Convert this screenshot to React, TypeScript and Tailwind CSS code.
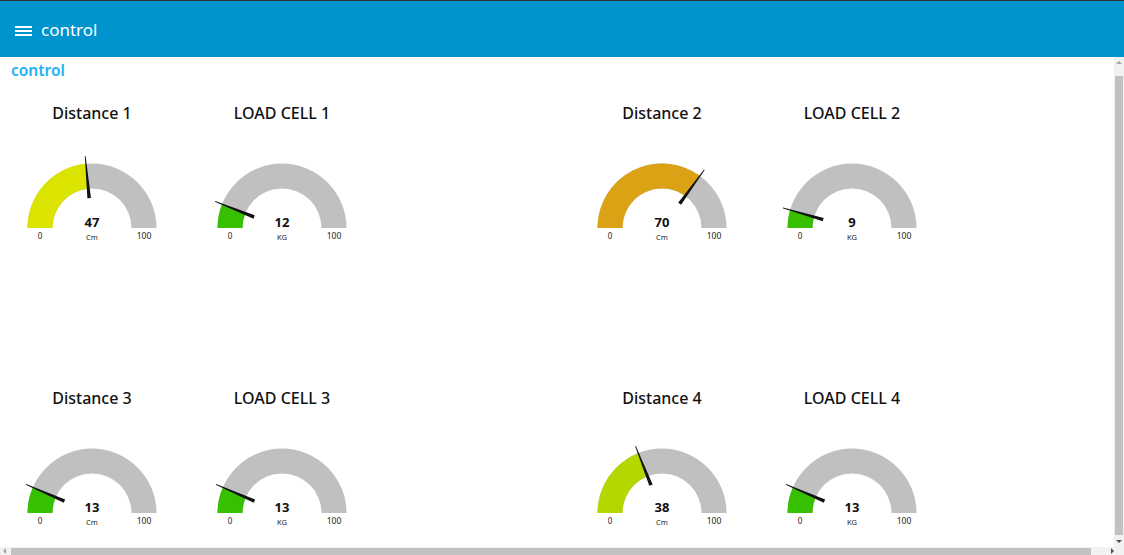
import React from "react";

type G = { title: string; value: number; unit: string; color: string } | null;

const rows: G[][] = [
  [
    { title: "Distance 1", value: 47, unit: "Cm", color: "#DBE300" },
    { title: "LOAD CELL 1", value: 12, unit: "KG", color: "#36C000" },
    null,
    { title: "Distance 2", value: 70, unit: "Cm", color: "#DBA216" },
    { title: "LOAD CELL 2", value: 9, unit: "KG", color: "#36C000" },
  ],
  [
    { title: "Distance 3", value: 13, unit: "Cm", color: "#36C000" },
    { title: "LOAD CELL 3", value: 13, unit: "KG", color: "#36C000" },
    null,
    { title: "Distance 4", value: 38, unit: "Cm", color: "#B2D800" },
    { title: "LOAD CELL 4", value: 13, unit: "KG", color: "#36C000" },
  ],
];

function pt(cx: number, cy: number, r: number, a: number) {
  return [cx - r * Math.cos(a), cy - r * Math.sin(a)];
}

function Gauge({ value, unit, color }: { value: number; unit: string; color: string }) {
  const cx = 75;
  const cy = 78;
  const ro = 64.5;
  const ri = 39.5;
  const a = (value / 100) * Math.PI;
  const [ox, oy] = pt(cx, cy, ro, a);
  const [ix, iy] = pt(cx, cy, ri, a);
  const bg = `M ${cx - ro} ${cy} A ${ro} ${ro} 0 0 1 ${cx + ro} ${cy} L ${cx + ri} ${cy} A ${ri} ${ri} 0 0 0 ${cx - ri} ${cy} Z`;
  const fg = `M ${cx - ro} ${cy} A ${ro} ${ro} 0 0 1 ${ox} ${oy} L ${ix} ${iy} A ${ri} ${ri} 0 0 0 ${cx - ri} ${cy} Z`;
  const dx = -Math.cos(a);
  const dy = -Math.sin(a);
  const px = -dy;
  const py = dx;
  const b1 = [cx + dx * 30 + px * 1.8, cy + dy * 30 + py * 1.8];
  const b2 = [cx + dx * 30 - px * 1.8, cy + dy * 30 - py * 1.8];
  const t1 = [cx + dx * 72 + px * 0.4, cy + dy * 72 + py * 0.4];
  const t2 = [cx + dx * 72 - px * 0.4, cy + dy * 72 - py * 0.4];
  return (
    <svg width="150" height="100" viewBox="0 0 150 100">
      <path d={bg} fill="#C0C0C0" />
      <path d={fg} fill={color} />
      <polygon
        points={`${b1[0]},${b1[1]} ${t1[0]},${t1[1]} ${t2[0]},${t2[1]} ${b2[0]},${b2[1]}`}
        fill="#111"
      />
      <text
        x={cx}
        y={cy - 1}
        textAnchor="middle"
        fontSize="13"
        fontWeight="700"
        fill="#111"
        fontFamily="'Noto Sans', sans-serif"
      >
        {value}
      </text>
      <text x={cx} y={cy + 12} textAnchor="middle" fontSize="7.5" fill="#222" fontFamily="'Noto Sans', sans-serif">
        {unit}
      </text>
      <text x={cx - 52} y={cy + 11} textAnchor="middle" fontSize="8" fill="#222" fontFamily="'Noto Sans', sans-serif">
        0
      </text>
      <text x={cx + 52} y={cy + 11} textAnchor="middle" fontSize="8.5" fill="#222" fontFamily="'Noto Sans', sans-serif">
        100
      </text>
    </svg>
  );
}

export default function App() {
  return (
    <div
      className="relative w-[1124px] h-[555px] overflow-hidden bg-white"
      style={{ fontFamily: "'Noto Sans', sans-serif" }}
    >
      <header className="h-[57px] bg-[#0094CE] border-t border-[#333] flex items-center pl-[15px] pt-[3px]">
        <div className="flex flex-col gap-[2px] w-[17px] mt-[1px]">
          <span className="block h-[2px] bg-white" />
          <span className="block h-[2px] bg-white" />
          <span className="block h-[2px] bg-white" />
        </div>
        <span className="ml-[9px] text-[17px] text-white leading-none mb-[2px]">control</span>
      </header>
      <div className="pl-[11px] h-5 mt-[3px] text-[15.5px] font-semibold leading-5 text-[#22B2F4]">control</div>
      <div className="mt-[21px] flex flex-col">
        {rows.map((row, ri) => (
          <div key={ri} className="flex gap-[6px] h-[285px]">
            {row.map((g, gi) => (
              <div key={gi} className="w-[184px] flex flex-col items-center">
                {g && (
                  <>
                    <div className="h-6 leading-6 text-[16px] text-[#111] font-medium">{g.title}</div>
                    <div className="mt-[25px]">
                      <Gauge value={g.value} unit={g.unit} color={g.color} />
                    </div>
                  </>
                )}
              </div>
            ))}
          </div>
        ))}
      </div>
      {/* vertical scrollbar */}
      <div className="absolute right-0 top-[57px] w-[10px] h-[490px] bg-[#F1F1F1] flex flex-col items-center">
        <div className="mt-[4px] w-0 h-0 border-l-[3px] border-r-[3px] border-b-[3px] border-l-transparent border-r-transparent border-b-[#A3A3A3]" />
        <div className="mt-[12px] w-[8px] h-[459px] bg-[#C1C1C1]" />
        <div className="mt-[5px] w-0 h-0 border-l-[3px] border-r-[3px] border-t-[3px] border-l-transparent border-r-transparent border-t-[#505050]" />
      </div>
      {/* horizontal scrollbar */}
      <div className="absolute left-0 bottom-0 w-[1124px] h-[8px] bg-[#F1F1F1] flex items-center">
        <div className="ml-[3px] w-0 h-0 border-t-[3px] border-b-[3px] border-r-[3px] border-t-transparent border-b-transparent border-r-[#A3A3A3]" />
        <div className="ml-[5px] w-[1080px] h-[7px] bg-[#C1C1C1]" />
        <div className="ml-[20px] w-0 h-0 border-t-[3px] border-b-[3px] border-l-[3px] border-t-transparent border-b-transparent border-l-[#505050]" />
      </div>
    </div>
  );
}
